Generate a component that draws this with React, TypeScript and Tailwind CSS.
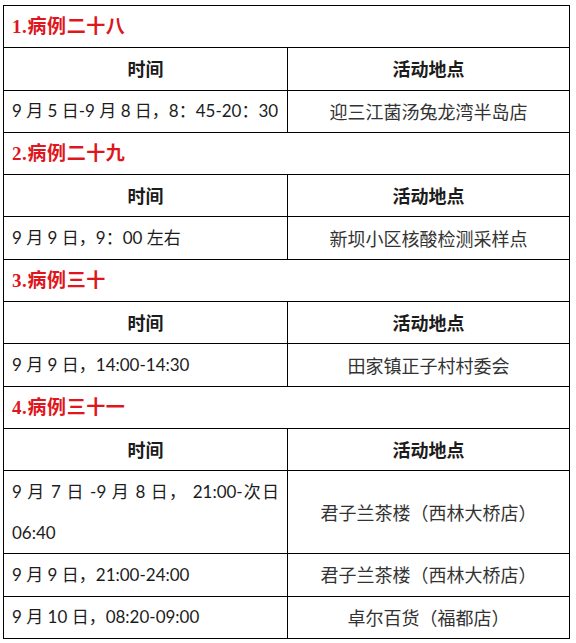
const cjk = '"Noto Sans CJK SC", sans-serif'

type Row = { time: React.ReactNode; place: string; tall?: boolean }
type Case = { title: string; rows: Row[] }

const cases: Case[] = [
  {
    title: '病例二十八',
    rows: [{ time: '9 月 5 日-9 月 8 日，8：45-20：30', place: '迎三江菌汤兔龙湾半岛店' }],
  },
  {
    title: '病例二十九',
    rows: [{ time: '9 月 9 日，9：00 左右', place: '新坝小区核酸检测采样点' }],
  },
  {
    title: '病例三十',
    rows: [{ time: '9 月 9 日，14:00-14:30', place: '田家镇正子村村委会' }],
  },
  {
    title: '病例三十一',
    rows: [
      {
        time: (
          <>
            <span className="block [text-align-last:justify]">9 月 7 日 -9 月 8 日， 21:00-次日</span>
            <span className="block">06:40</span>
          </>
        ),
        place: '君子兰茶楼（西林大桥店）',
        tall: true,
      },
      { time: '9 月 9 日，21:00-24:00', place: '君子兰茶楼（西林大桥店）' },
      { time: '9 月 10 日，08:20-09:00', place: '卓尔百货（福都店）' },
    ],
  },
]

export default function App() {
  return (
    <div className="bg-white w-[576px] h-[643px] pl-[3px] pt-[5px]">
      <table
        className="w-[566px] border-collapse table-fixed text-[18px] text-[#1c1c1c]"
        style={{ fontFamily: `Lato, ${cjk}` }}
      >
        <colgroup>
          <col className="w-[284px]" />
          <col className="w-[282px]" />
        </colgroup>
        <tbody>
          {cases.map((c, i) => (
            <CaseBlock key={c.title} index={i + 1} data={c} />
          ))}
        </tbody>
      </table>
    </div>
  )
}

function CaseBlock({ index, data }: { index: number; data: Case }) {
  return (
    <>
      <tr className="h-[42.3px]">
        <td colSpan={2} className="border border-black px-[8px] text-[#e0161e] font-bold text-[19px] tracking-[0.6px]">
          <span style={{ fontFamily: '"Liberation Serif", serif' }}>{index}.</span>
          <span style={{ fontFamily: cjk }}>{data.title}</span>
        </td>
      </tr>
      <tr className="h-[42.3px]">
        <td className="border border-black text-center font-bold" style={{ fontFamily: cjk }}>时间</td>
        <td className="border border-black text-center font-bold" style={{ fontFamily: cjk }}>活动地点</td>
      </tr>
      {data.rows.map((r, j) => (
        <tr key={j} className={r.tall ? 'h-[83px]' : 'h-[42.3px]'}>
          <td className={'border border-black px-[8px] text-[17px] whitespace-nowrap ' + (r.tall ? 'leading-[41px]' : '')}>{r.time}</td>
          <td className="border border-black text-center text-[#333]" style={{ fontFamily: cjk }}>{r.place}</td>
        </tr>
      ))}
    </>
  )
}
